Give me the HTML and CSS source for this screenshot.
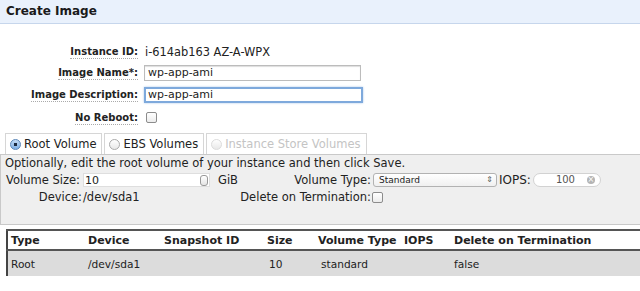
FILE: index.html
```html
<!DOCTYPE html>
<html lang="en">
<head>
  <meta charset="UTF-8" />
  <title>Create Image</title>
  <link rel="stylesheet" href="styles.css">
</head>
<body>
  <div class="title">Create Image</div>

  <div class="form">
    <div class="row short">
      <span class="label">Instance ID:</span>
      <span class="value">i-614ab163 AZ-A-WPX</span>
    </div>
    <div class="row short">
      <span class="label">Image Name*:</span>
      <input class="text" type="text" value="wp-app-ami" />
    </div>
    <div class="row">
      <span class="label">Image Description:</span>
      <input class="text focused" type="text" value="wp-app-ami" />
    </div>
    <div class="row">
      <span class="label">No Reboot:</span>
      <span class="check"></span>
    </div>
  </div>

  <div class="tabs">
    <div class="tab active"><span class="radio on"></span>Root Volume</div>
    <div class="tab"><span class="radio"></span>EBS Volumes</div>
    <div class="tab disabled"><span class="radio"></span>Instance Store Volumes</div>
  </div>

  <div class="panel">
    <div class="hint">Optionally, edit the root volume of your instance and then click Save.</div>
    <div class="fields">
      <span class="flabel">Volume Size:</span>
      <span class="number"><span class="num-val">10</span><span class="spin"></span></span>
      <span class="unit">GiB</span>
      <span class="flabel">Volume Type:</span>
      <span class="select">Standard<span class="arrows">&#8661;</span></span>
      <span class="iops">IOPS:</span>
      <span class="search">100<span class="clear">&times;</span></span>

      <span class="flabel">Device:</span>
      <span class="plain">/dev/sda1</span>
      <span></span>
      <span class="flabel">Delete on Termination:</span>
      <span><span class="check small"></span></span>
    </div>
  </div>

  <table class="volumes">
    <thead>
      <tr>
        <th class="c-type">Type</th>
        <th class="c-dev">Device</th>
        <th class="c-snap">Snapshot ID</th>
        <th class="c-size">Size</th>
        <th class="c-vtype">Volume Type</th>
        <th class="c-iops">IOPS</th>
        <th>Delete on Termination</th>
      </tr>
    </thead>
    <tbody>
      <tr>
        <td>Root</td>
        <td>/dev/sda1</td>
        <td></td>
        <td class="size">10</td>
        <td class="vt">standard</td>
        <td></td>
        <td>false</td>
      </tr>
    </tbody>
  </table>
</body>
</html>
```

FILE: styles.css
```css
body {
  margin: 0;
  background: #fff;
  color: #222;
  font-family: "DejaVu Sans", Verdana, sans-serif;
  font-size: 11px;
}
.title {
  height: 23px;
  line-height: 23px;
  padding-left: 6px;
  background: #e9f1fc;
  border-bottom: 1px solid #c6d6ec;
  font-weight: bold;
  font-size: 12px;
  color: #1a1a1a;
}
.form {
  padding-top: 17px;
}
.row {
  display: grid;
  grid-template-columns: 138px auto;
  column-gap: 6px;
  align-items: center;
  height: 23px;
}
.row.short {
  height: 21px;
}
.label {
  justify-self: end;
  font-weight: bold;
  font-size: 10px;
  border-bottom: 1px dotted #aaa;
  line-height: 13px;
}
.value {
  margin-left: 1px;
  font-size: 11.4px;
}
.text {
  width: 209px;
  height: 12px;
  padding: 1px 3px;
  margin: 0;
  border: 1px solid #bcbcbc;
  box-shadow: inset 0 1px 1px #ddd;
  font-family: inherit;
  font-size: 11px;
  color: #222;
}
.text.focused {
  border: 2px solid #7ea9dc;
  box-shadow: 0 0 2px #a9c6ea;
  padding: 0 2px;
  width: 211px;
}
.check {
  display: inline-block;
  width: 9px;
  height: 9px;
  margin-left: 2px;
  border: 1px solid #8c8c8c;
  border-radius: 2px;
  background: linear-gradient(#fff, #ececec);
}
.check.small {
  margin-left: 1px;
  vertical-align: -2px;
}
.tabs {
  display: flex;
  margin-top: 4px;
  padding-left: 5px;
  height: 21px;
}
.tab {
  display: flex;
  align-items: center;
  padding: 0 5px 0 4px;
  margin-right: 2px;
  border: 1px solid #d6d6d6;
  border-bottom: none;
  background: #fff;
  font-size: 11.5px;
}
.tab.disabled {
  color: #c4c4c4;
}
.radio {
  display: inline-block;
  box-sizing: border-box;
  width: 11px;
  height: 11px;
  margin-right: 3px;
  border: 1px solid #aaa;
  border-radius: 50%;
  background: linear-gradient(#fff, #e8e8e8);
}
.tab.disabled .radio {
  border-color: #dcdcdc;
}
.radio.on {
  border-color: #5a86b8;
  background: radial-gradient(circle, #1b2a40 0 1.6px, transparent 2px), linear-gradient(#c4dcf6, #7fb0e6);
}
.panel {
  height: 69px;
  border-top: 1px solid #c9c9c9;
  border-left: 1px solid #c9c9c9;
  border-bottom: 1px solid #c9c9c9;
  background: #efefef;
  padding-left: 4px;
  font-size: 11.5px;
}
.hint {
  line-height: 15px;
  padding-top: 1px;
}
.fields {
  display: grid;
  grid-template-columns: 77px 133px 21px 135px auto auto auto;
  grid-auto-rows: 17px;
  justify-content: start;
  align-items: center;
}
.flabel {
  justify-self: end;
}
.fields .flabel:first-child {
  justify-self: start;
  padding-left: 1px;
}
.number {
  position: relative;
  width: 127px;
  height: 14px;
  margin-left: 1px;
  background: #fff;
  border: 1px solid #dedede;
  box-sizing: border-box;
  padding-left: 1px;
  line-height: 13px;
  font-size: 11px;
}
.spin {
  position: absolute;
  right: 1px;
  top: 1px;
  width: 6px;
  height: 9px;
  border: 1px solid #999;
  border-radius: 3px;
  background: linear-gradient(#fff, #e4e4e4);
}
.unit {
  padding-left: 3px;
}
.plain {
  padding-left: 1px;
}
.select {
  position: relative;
  width: 124px;
  height: 14px;
  box-sizing: border-box;
  margin-left: 2px;
  padding-left: 5px;
  border: 1px solid #b2b2b2;
  border-radius: 3px;
  background: linear-gradient(#fff, #f0f0f0);
  font-size: 9px;
  line-height: 12px;
}
.arrows {
  position: absolute;
  right: 3px;
  top: 0;
  font-size: 8px;
  color: #555;
}
.iops {
  padding-left: 2px;
  font-size: 12px;
}
.search {
  position: relative;
  width: 68px;
  height: 14px;
  margin-left: 2px;
  box-sizing: border-box;
  padding-left: 22px;
  border: 1px solid #d2d2d2;
  border-radius: 8px;
  background: #fff;
  font-size: 10px;
  line-height: 12px;
  color: #555;
}
.clear {
  position: absolute;
  right: 5px;
  top: 2px;
  width: 8px;
  height: 8px;
  border-radius: 50%;
  background: #b4b4b4;
  color: #fff;
  font-size: 8px;
  line-height: 8px;
  text-align: center;
}
.volumes {
  margin: 4px 0 0 6px;
  width: 634px;
  border-collapse: collapse;
  border-left: 2px solid #444;
  font-size: 10.6px;
}
.volumes th {
  text-align: left;
  font-weight: bold;
  font-size: 11px;
  height: 18px;
  padding: 0 0 0 3px;
  border-top: 2px solid #555;
  border-bottom: 2px solid #555;
}
.volumes td {
  height: 25px;
  padding: 0 0 0 3px;
  background: #dcdcdc;
}
.c-type { width: 74px; }
.c-dev { width: 73px; }
.c-snap { width: 100px; }
.c-size { width: 48px; }
.c-vtype { width: 83px; }
.c-iops { width: 47px; }
.volumes td.size { padding-left: 5px; }
.volumes td.vt { padding-left: 6px; }
```
